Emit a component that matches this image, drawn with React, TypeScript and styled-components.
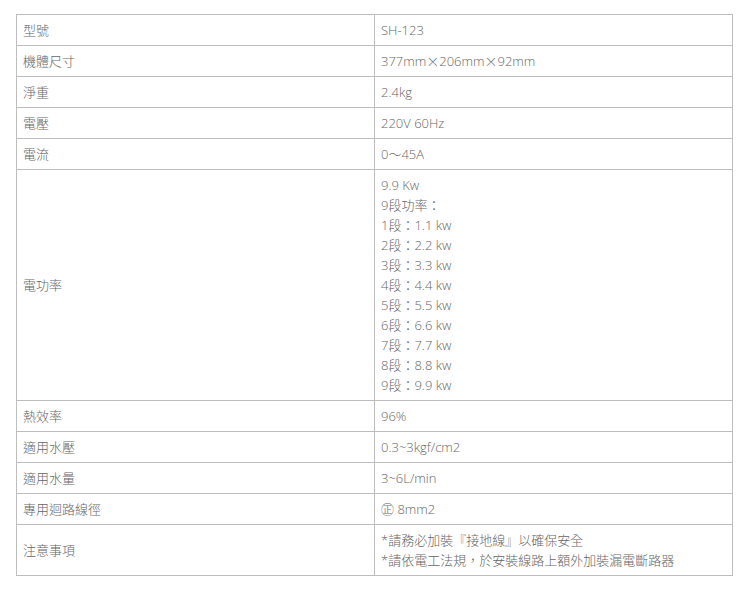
import styled, { createGlobalStyle } from 'styled-components';

const GlobalStyle = createGlobalStyle`
  body {
    margin: 0;
    background: #fff;
    font-family: "Open Sans", "Noto Sans CJK TC", sans-serif;
  }
`

const Wrapper = styled.div`
  padding: 14px 16px;
`

const SpecTable = styled.table`
  width: 100%;
  border-collapse: collapse;
  table-layout: fixed;
  border: 1px solid #bdbdbd;
  font-size: 13px;
  font-weight: 300;
  color: #666;
`

const Cell = styled.td`
  border: 1px solid #bdbdbd;
  padding: 5px 6px;
  line-height: 20px;
  vertical-align: middle;
  width: 50%;
`

const Line = styled.div`
  white-space: nowrap;
`

// full-width glyphs come from the CJK font, as in the original page
const Wide = styled.span`
  font-family: "Noto Sans CJK TC", sans-serif;
`

const specs: { label: string; value: React.ReactNode[] }[] = [
  { label: '型號', value: ['SH-123'] },
  {
    label: '機體尺寸',
    value: [
      <>
        377mm<Wide>×</Wide>206mm<Wide>×</Wide>92mm
      </>,
    ],
  },
  { label: '淨重', value: ['2.4kg'] },
  { label: '電壓', value: ['220V 60Hz'] },
  { label: '電流', value: ['0～45A'] },
  {
    label: '電功率',
    value: [
      '9.9 Kw',
      '9段功率：',
      '1段：1.1 kw',
      '2段：2.2 kw',
      '3段：3.3 kw',
      '4段：4.4 kw',
      '5段：5.5 kw',
      '6段：6.6 kw',
      '7段：7.7 kw',
      '8段：8.8 kw',
      '9段：9.9 kw',
    ],
  },
  { label: '熱效率', value: ['96%'] },
  { label: '適用水壓', value: ['0.3~3kgf/cm2'] },
  { label: '適用水量', value: ['3~6L/min'] },
  { label: '專用迴路線徑', value: ['㊣ 8mm2'] },
  {
    label: '注意事項',
    value: ['*請務必加裝『接地線』以確保安全', '*請依電工法規，於安裝線路上額外加裝漏電斷路器'],
  },
]

export default function App() {
  return (
    <>
      <GlobalStyle />
      <Wrapper>
        <SpecTable>
          <tbody>
            {specs.map(row => (
              <tr key={row.label}>
                <Cell>{row.label}</Cell>
                <Cell>
                  {row.value.map((v, i) => (
                    <Line key={i}>{v}</Line>
                  ))}
                </Cell>
              </tr>
            ))}
          </tbody>
        </SpecTable>
      </Wrapper>
    </>
  )
}
